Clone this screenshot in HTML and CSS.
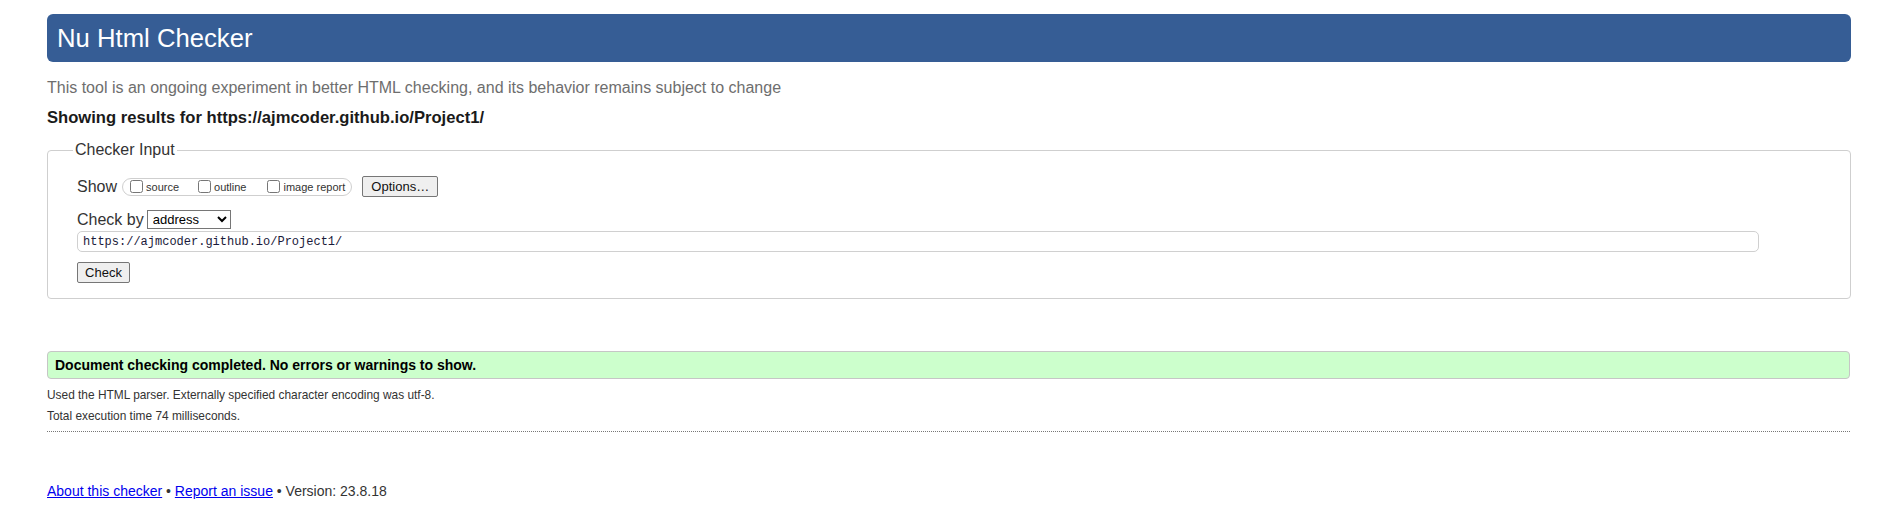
FILE: index.html
```html
<!DOCTYPE html>
<html lang="en">
<head>
<meta charset="utf-8">
<title>Nu Html Checker</title>
<link rel="stylesheet" href="styles.css">
</head>
<body>
<h1 class="title">Nu Html Checker</h1>
<p class="intro">This tool is an ongoing experiment in better HTML checking, and its behavior remains subject to change</p>
<p class="showing">Showing results for https://ajmcoder.github.io/Project1/</p>
<form class="form">
  <fieldset class="input-box">
    <legend class="legend">Checker Input</legend>
    <div class="row show-row">
      <span class="label">Show</span>
      <span class="pill">
        <label class="opt"><input type="checkbox" class="cb">source</label>
        <label class="opt opt-outline"><input type="checkbox" class="cb">outline</label>
        <label class="opt opt-image"><input type="checkbox" class="cb">image report</label>
      </span>
      <button type="button" class="btn btn-options">Options…</button>
    </div>
    <div class="row by-row">
      <span class="label">Check by</span>
      <select class="select"><option>address</option></select>
    </div>
    <input class="url" type="text" value="https://ajmcoder.github.io/Project1/">
    <div class="row submit-row">
      <button type="button" class="btn btn-check">Check</button>
    </div>
  </fieldset>
</form>
<div class="success">Document checking completed. No errors or warnings to show.</div>
<p class="meta meta-first">Used the HTML parser. Externally specified character encoding was utf-8.</p>
<p class="meta">Total execution time 74 milliseconds.</p>
<hr class="rule">
<p class="footer"><a href="#" class="link">About this checker</a> • <a href="#" class="link">Report an issue</a> • Version: 23.8.18</p>
</body>
</html>
```
FILE: styles.css
```css
html, body {
  background: #fff;
}
body {
  margin: 0;
  padding: 14px 50px 0 47px;
  font-family: "Liberation Sans", Arial, sans-serif;
  color: #222;
}
.title {
  margin: 0;
  height: 48px;
  line-height: 48px;
  padding: 0 10px;
  background: #365d95;
  color: #fff;
  font-size: 25.7px;
  font-weight: normal;
  border-radius: 6px;
}
.intro {
  margin: 17px 0 0;
  font-size: 16px;
  line-height: 18px;
  color: #6e6e6e;
}
.showing {
  margin: 12px 0 0;
  font-size: 16.6px;
  line-height: 18px;
  font-weight: bold;
  color: #1a1a1a;
}
.form {
  margin: 14px 0 0;
}
.input-box {
  margin: 0;
  padding: 17px 29px 15px 29px;
  border: 1px solid #cfcfcf;
  border-radius: 4px;
}
.legend {
  font-size: 16px;
  line-height: 18px;
  padding: 0 2px;
  margin-left: -4px;
  color: #333;
}
.row {
  display: flex;
  align-items: center;
  height: 21px;
}
.by-row {
  margin-top: 12px;
}
.submit-row {
  margin-top: 10px;
}
.label {
  font-size: 16px;
  color: #333;
}
.pill {
  display: inline-flex;
  align-items: center;
  height: 16px;
  margin-left: 5px;
  padding: 0 6px 0 6px;
  border: 1px solid #cfcfcf;
  border-radius: 9px;
}
.opt {
  display: inline-flex;
  align-items: center;
  font-size: 11px;
  color: #333;
}
.opt-outline {
  margin-left: 18px;
}
.opt-image {
  margin-left: 20px;
}
.cb {
  width: 13px;
  height: 13px;
  margin: 0 3px 0 1px;
}
.btn {
  font-family: "Liberation Sans", Arial, sans-serif;
  font-size: 13px;
  color: #111;
  background: #efefef;
  border: 1px solid #767676;
  border-radius: 2px;
  padding: 0 6px;
  height: 21px;
}
.btn-options {
  margin-left: 10px;
  width: 76px;
}
.btn-check {
  width: 53px;
  height: 21px;
}
.select {
  margin-left: 3px;
  width: 84px;
  height: 19px;
  font-family: "Liberation Sans", Arial, sans-serif;
  font-size: 13px;
  color: #000;
  border: 1px solid #767676;
  border-radius: 0;
  background: #fff;
  padding: 0 1px;
}
.url {
  display: block;
  box-sizing: border-box;
  margin: 1px 0 0;
  width: 1682px;
  height: 21px;
  padding: 0 5px;
  font-family: "Liberation Mono", "DejaVu Sans Mono", monospace;
  font-size: 12px;
  color: #1a1a3a;
  border: 1px solid #d0d0d0;
  border-radius: 5px;
  outline: none;
}
.success {
  margin-top: 52px;
  box-sizing: border-box;
  height: 28px;
  line-height: 26px;
  padding: 0 7px;
  background: #ccffcc;
  border: 1px solid #c6c6c6;
  border-radius: 4px;
  font-size: 14px;
  font-weight: bold;
  color: #000;
  width: 1803px;
}
.meta {
  margin: 0;
  font-size: 11.9px;
  line-height: 21px;
  color: #333;
}
.meta-first {
  margin-top: 6px;
}
.rule {
  margin: 4px 0 0;
  border: 0;
  border-top: 1px dotted #777;
  height: 0;
  width: 1803px;
}
.footer {
  margin: 50px 0 0;
  font-size: 14px;
  line-height: 18px;
  color: #333;
}
.link {
  color: #0000ee;
  text-decoration: underline;
}
```
